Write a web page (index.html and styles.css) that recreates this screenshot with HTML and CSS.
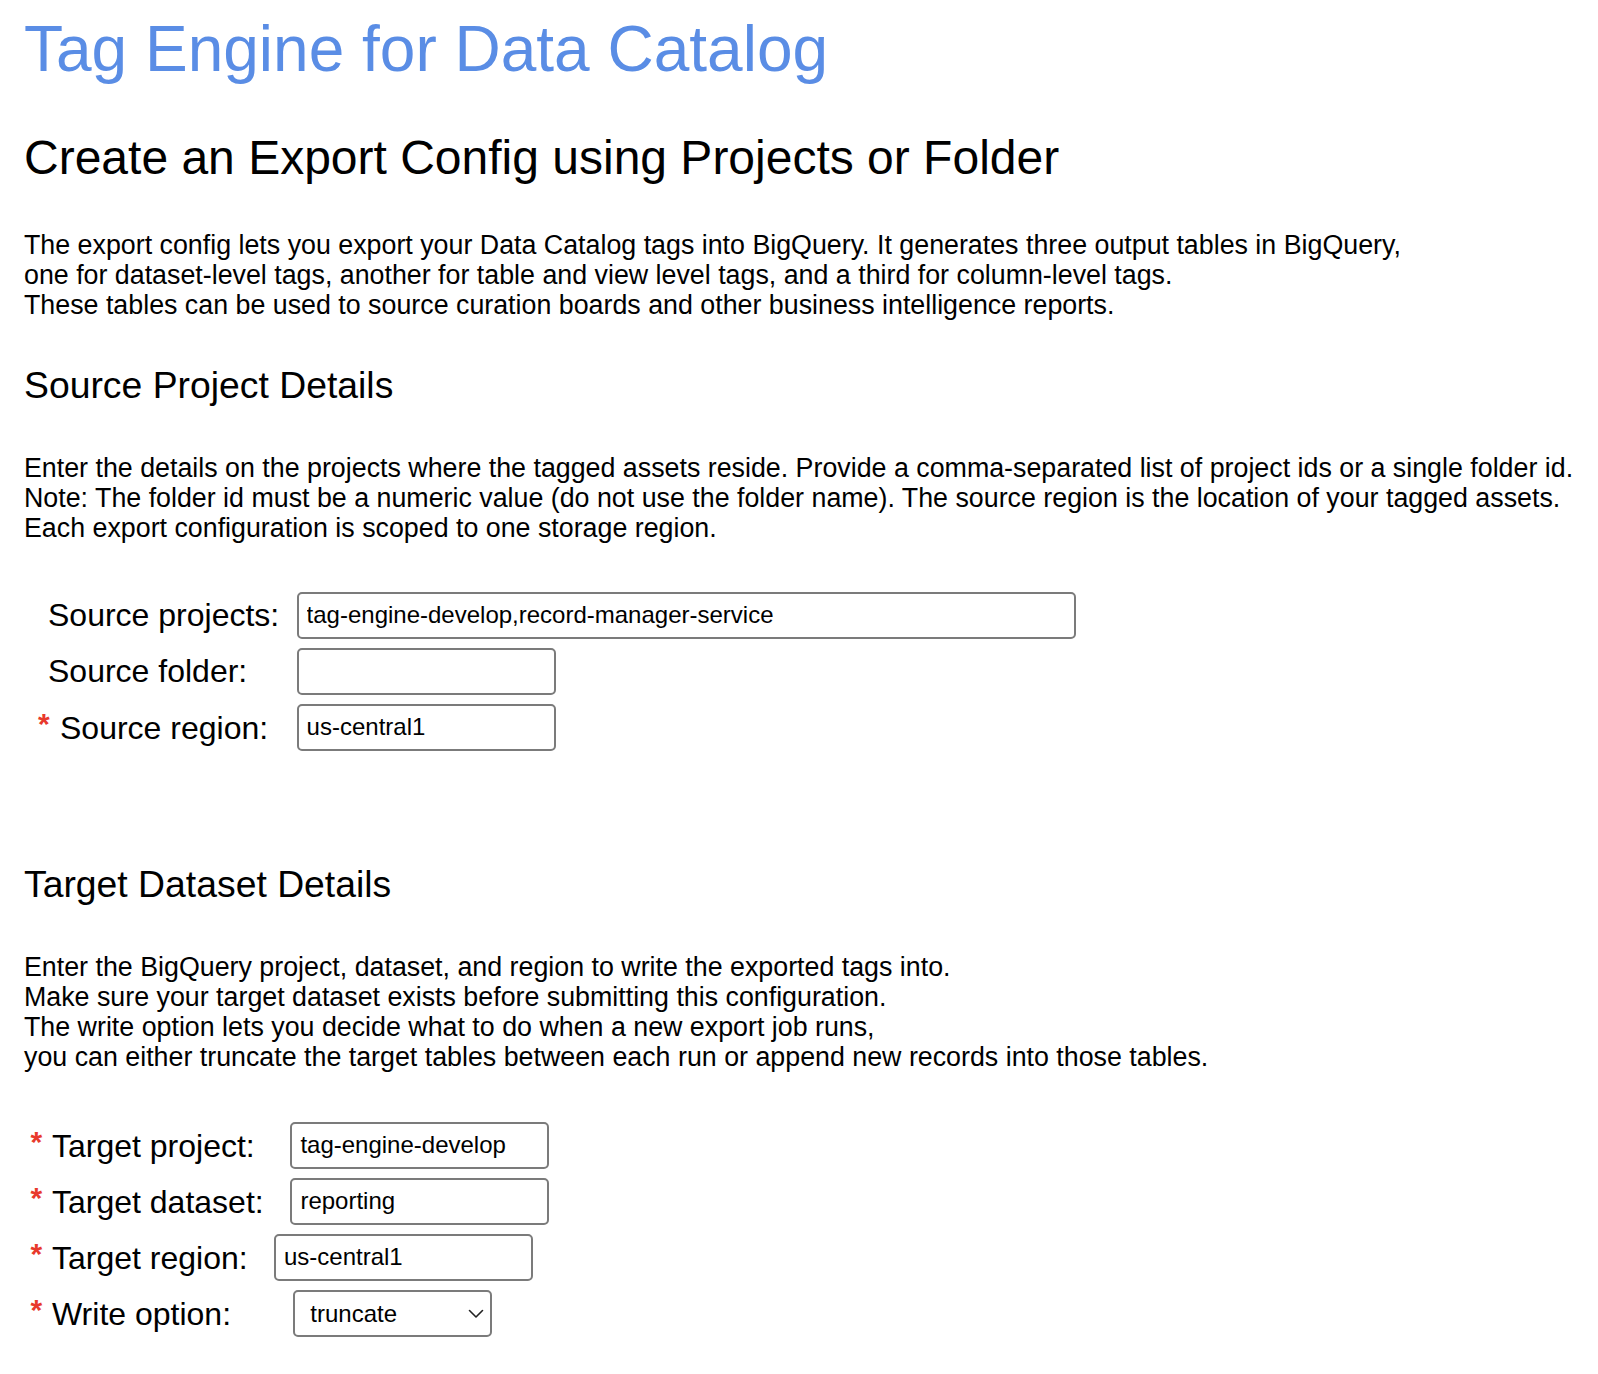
FILE: index.html
```html
<!DOCTYPE html>
<html lang="en">
<head>
<meta charset="utf-8">
<title>Tag Engine for Data Catalog</title>
<link rel="stylesheet" href="styles.css">
</head>
<body>
<h1 class="title">Tag Engine for Data Catalog</h1>
<h2 class="page-heading">Create an Export Config using Projects or Folder</h2>
<p class="intro">The export config lets you export your Data Catalog tags into BigQuery. It generates three output tables in BigQuery,<br>one for dataset-level tags, another for table and view level tags, and a third for column-level tags.<br>These tables can be used to source curation boards and other business intelligence reports.</p>

<h3 class="section-heading">Source Project Details</h3>
<p class="intro">Enter the details on the projects where the tagged assets reside. Provide a comma-separated list of project ids or a single folder id.<br>Note: The folder id must be a numeric value (do not use the folder name). The source region is the location of your tagged assets.<br>Each export configuration is scoped to one storage region.</p>

<div class="form form-source">
  <div class="row">
    <label class="lbl lbl-src lbl-plain" for="src-projects">Source projects:</label>
    <input class="field field-wide" id="src-projects" type="text" value="tag-engine-develop,record-manager-service">
  </div>
  <div class="row">
    <label class="lbl lbl-src lbl-plain" for="src-folder">Source folder:</label>
    <input class="field" id="src-folder" type="text" value="">
  </div>
  <div class="row">
    <label class="lbl lbl-src" for="src-region"><span class="req">*</span>Source region:</label>
    <input class="field" id="src-region" type="text" value="us-central1">
  </div>
</div>

<h3 class="section-heading section-heading-second">Target Dataset Details</h3>
<p class="intro">Enter the BigQuery project, dataset, and region to write the exported tags into.<br>Make sure your target dataset exists before submitting this configuration.<br>The write option lets you decide what to do when a new export job runs,<br>you can either truncate the target tables between each run or append new records into those tables.</p>

<div class="form form-target">
  <div class="row">
    <label class="lbl lbl-tgt lbl-w1" for="tgt-project"><span class="req">*</span>Target project:</label>
    <input class="field" id="tgt-project" type="text" value="tag-engine-develop">
  </div>
  <div class="row">
    <label class="lbl lbl-tgt lbl-w1" for="tgt-dataset"><span class="req">*</span>Target dataset:</label>
    <input class="field" id="tgt-dataset" type="text" value="reporting">
  </div>
  <div class="row">
    <label class="lbl lbl-tgt lbl-w2" for="tgt-region"><span class="req">*</span>Target region:</label>
    <input class="field" id="tgt-region" type="text" value="us-central1">
  </div>
  <div class="row">
    <label class="lbl lbl-tgt lbl-w3" for="write-option"><span class="req">*</span>Write option:</label>
    <span class="select-wrap">
      <select class="select" id="write-option">
        <option selected>truncate</option>
        <option>append</option>
      </select>
      <svg class="chevron" width="16" height="10" viewBox="0 0 16 10" aria-hidden="true"><path d="M1.5 1.5 L8 8 L14.5 1.5" fill="none" stroke="#222" stroke-width="1.6" stroke-linecap="round" stroke-linejoin="round"/></svg>
    </span>
  </div>
</div>
</body>
</html>
```

FILE: styles.css
```css
html, body {
  margin: 0;
  padding: 0;
  background: #ffffff;
}

body {
  padding-left: 24px;
  font-family: "Liberation Sans", Arial, Helvetica, sans-serif;
  color: #000;
  min-height: 1374px;
  box-sizing: border-box;
}

.title {
  margin: 13px 0 0;
  font-size: 64px;
  font-weight: normal;
  line-height: 1.15;
  color: #5a8de5;
}

.page-heading {
  margin: 43px 0 0;
  font-size: 48px;
  font-weight: normal;
  line-height: 1.15;
}

.intro {
  margin: 45px 0 0;
  font-size: 26.8px;
  line-height: 30px;
}

.section-heading {
  margin: 44px 0 0;
  font-size: 37.33px;
  font-weight: normal;
  line-height: 1.15;
}

.section-heading + .intro {
  margin-top: 46px;
}

.section-heading-second {
  margin-top: 112px;
}

.form {
  margin-top: 49px;
  display: flex;
  flex-direction: column;
  align-items: flex-start;
  gap: 9px;
}

.form-target {
  margin-top: 50px;
}

.row {
  display: flex;
  align-items: center;
}

.lbl {
  flex: none;
  font-size: 32px;
  line-height: 1.15;
  white-space: nowrap;
}

.lbl-src {
  margin-left: 14px;
  width: 258.6px;
}

.lbl-plain {
  padding-left: 10px;
  box-sizing: border-box;
}

.lbl-tgt {
  margin-left: 6.6px;
}

.lbl-w1 { width: 259.8px; }
.lbl-w2 { width: 243.4px; }
.lbl-w3 { width: 262.7px; }

.req {
  display: inline-block;
  width: 22px;
  font-size: 30px;
  font-weight: bold;
  color: #e8392c;
  vertical-align: 5px;
}

.lbl-tgt .req {
  width: 21.4px;
}

.field {
  box-sizing: border-box;
  width: 259px;
  height: 47px;
  margin: 0;
  padding: 0 8px;
  border: 2px solid #7b7b7b;
  border-radius: 5px;
  background: #fff;
  font-family: "Liberation Sans", Arial, Helvetica, sans-serif;
  font-size: 24px;
  color: #000;
  outline: none;
}

.field-wide {
  width: 779px;
}

.select-wrap {
  position: relative;
  display: inline-block;
  width: 199px;
  height: 47px;
}

.select {
  box-sizing: border-box;
  width: 199px;
  height: 47px;
  margin: 0;
  padding: 0 30px 0 15px;
  border: 2px solid #7b7b7b;
  border-radius: 5px;
  background: #fff;
  font-family: "Liberation Sans", Arial, Helvetica, sans-serif;
  font-size: 24px;
  color: #000;
  -webkit-appearance: none;
  appearance: none;
  outline: none;
}

.chevron {
  position: absolute;
  right: 8px;
  top: 19px;
  pointer-events: none;
}
```
